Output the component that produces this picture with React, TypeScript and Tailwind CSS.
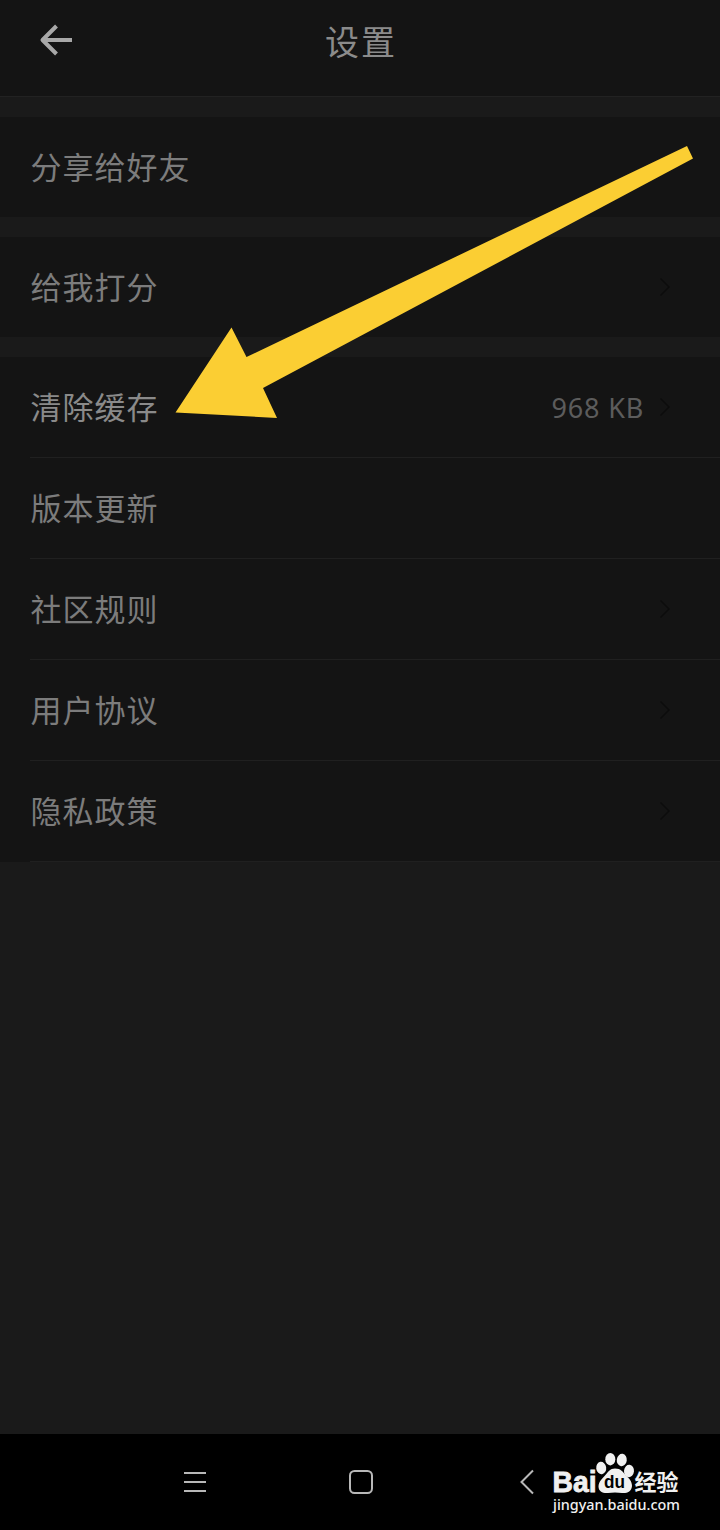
import clsx from "clsx"

type Item = {
  label: string
  value?: string
  chevron?: boolean
  bright?: boolean
}

const groups: Item[][] = [
  [{ label: "分享给好友" }],
  [{ label: "给我打分", chevron: true }],
  [
    { label: "清除缓存", value: "968 KB", chevron: true, bright: true },
    { label: "版本更新" },
    { label: "社区规则", chevron: true },
    { label: "用户协议", chevron: true },
    { label: "隐私政策", chevron: true },
  ],
]

function Chevron() {
  return (
    <svg width="12" height="20" viewBox="0 0 12 20" fill="none" className="shrink-0">
      <path d="M1.5 1.5L10 10L1.5 18.5" stroke="#0c0c0c" strokeWidth="1.4" />
    </svg>
  )
}

function Row({ item, divided }: { item: Item; divided: boolean }) {
  return (
    <div className={clsx("pl-[30px]", divided ? "h-[101px]" : "h-[100px]")}>
      <div
        className={clsx(
          "flex h-full items-center justify-between pr-[49px]",
          divided && "border-b border-[#202020]"
        )}
      >
        <span
          className={clsx(
            "pb-[3px] pl-[0.5px] text-[31px] leading-none font-normal tracking-[1px]",
            item.bright ? "text-[#8a8a8a]" : "text-[#7c7c7c]"
          )}
        >
          {item.label}
        </span>
        <div className="flex items-center gap-[15px]">
          {item.value && (
            <span className="font-['Noto_Sans','Liberation_Sans',sans-serif] text-[27px] leading-none font-normal tracking-[0.8px] text-[#5c5c5c]">
              {item.value}
            </span>
          )}
          {item.chevron && <Chevron />}
        </div>
      </div>
    </div>
  )
}

function Pointer() {
  return (
    <svg
      width="720"
      height="440"
      viewBox="0 0 720 440"
      className="pointer-events-none absolute top-0 left-0"
    >
      <path
        d="M175.5 412.5L231.5 327.5L246.5 357L687 146L693 158.5L263 388L277 418Z"
        fill="#fbce33"
      />
    </svg>
  )
}

function Watermark() {
  return (
    <svg
      width="140"
      height="70"
      viewBox="0 0 140 70"
      fill="#f0f0f0"
      className="absolute right-[30px] bottom-[10px]"
    >
      <text
        x="2.5"
        y="42"
        fontSize="29"
        fontWeight="700"
        textLength="44"
        lengthAdjust="spacingAndGlyphs"
        stroke="#f0f0f0"
        strokeWidth="0.8"
        className="font-['Liberation_Sans',sans-serif]"
      >
        Bai
      </text>
      <ellipse cx="51.2" cy="18" rx="5" ry="6.2" transform="rotate(-8 51.2 18)" />
      <ellipse cx="60.3" cy="9.2" rx="5" ry="6.2" />
      <ellipse cx="71.8" cy="10" rx="5" ry="6.2" transform="rotate(8 71.8 10)" />
      <ellipse cx="79" cy="21" rx="5" ry="6.2" transform="rotate(6 79 21)" />
      <path d="M65 18.5C71 18.5 73 22 76 25.5C79 28.5 82 31 82 36C81.500 41.500 77 43.500 72 43C68 42.300 62 42.300 58 43C53 43.500 48.500 41.500 48.500 36.500C48.500 31.500 52 29 55 25.500C58 22 60 18.500 65 18.500Z" />
      <text
        x="54"
        y="37.500"
        fontSize="18"
        fontWeight="700"
        fill="#000"
        textLength="21"
        lengthAdjust="spacingAndGlyphs"
        className="font-['Liberation_Sans',sans-serif]"
      >
        du
      </text>
      <text
        x="84.500"
        y="40"
        fontSize="22"
        fontWeight="700"
        textLength="44"
        className="font-['Noto_Sans_CJK_SC',sans-serif]"
      >
        经验
      </text>
      <text
        x="3"
        y="59.500"
        fontSize="15"
        fontWeight="500"
        textLength="127"
        lengthAdjust="spacingAndGlyphs"
        className="font-['Noto_Sans','Open_Sans',sans-serif]"
      >
        jingyan.baidu.com
      </text>
    </svg>
  )
}

export default function App() {
  return (
    <div className="relative flex h-[1530px] w-[720px] flex-col overflow-hidden bg-[#1a1a1a] font-['Noto_Sans_CJK_SC',sans-serif]">
      <header className="grid h-[97px] shrink-0 grid-cols-3 border-b border-[#222222] bg-[#141414] px-[39px] pt-[22px]">
        <svg width="34" height="36" viewBox="0 0 34 36" fill="none">
          <path
            d="M17.500 4L3.500 18L17.500 32M4 18H33"
            stroke="#a8a8a8"
            strokeWidth="4"
            strokeLinejoin="round"
          />
        </svg>
        <h1 className="pt-[2px] pl-[2px] text-center text-[34px] leading-none font-normal tracking-[2px] text-[#8b8b8b]">
          设置
        </h1>
      </header>

      <main className="flex flex-1 flex-col gap-5 pt-5">
        {groups.map((items) => (
          <section key={items[0].label} className="bg-[#141414]">
            {items.map((item) => (
              <Row key={item.label} item={item} divided={items.length > 1} />
            ))}
          </section>
        ))}
      </main>

      <nav className="flex h-24 shrink-0 items-center gap-[142px] bg-black pl-[183px]">
        <svg width="24" height="24" viewBox="0 0 24 24" stroke="#b8b8b8" strokeWidth="2">
          <path d="M1 3H23M1 12H23M1 21H23" />
        </svg>
        <svg width="24" height="24" viewBox="0 0 24 24" fill="none">
          <rect x="1" y="1" width="22" height="22" rx="4.500" stroke="#b8b8b8" strokeWidth="2" />
        </svg>
        <svg width="24" height="26" viewBox="0 0 24 26" fill="none">
          <path d="M18 1.500L6.500 13L18 24.500" stroke="#b8b8b8" strokeWidth="2" />
        </svg>
      </nav>

      <Pointer />
      <Watermark />
    </div>
  )
}
